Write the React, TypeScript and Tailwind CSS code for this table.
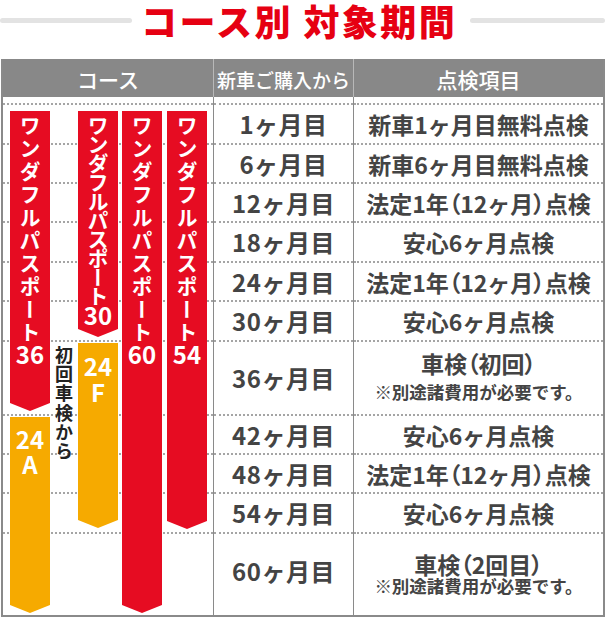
import React from "react";

const FONT = { fontFamily: '"Noto Sans CJK JP", "Noto Sans", sans-serif' };

type Row = { h: string; m: string; r: React.ReactNode; note?: "loose" | "tight" };

const P1 = <span className="[font-feature-settings:'palt']">（</span>;
const P2 = <span className="[font-feature-settings:'palt']">）</span>;

const houtei = (
  <>
    法定1年{P1}12ヶ月{P2}点検
  </>
);

const rows: Row[] = [
  { h: "row-start-3", m: "1ヶ月目", r: "新車1ヶ月目無料点検" },
  { h: "row-start-4", m: "6ヶ月目", r: "新車6ヶ月目無料点検" },
  { h: "row-start-5", m: "12ヶ月目", r: houtei },
  { h: "row-start-6", m: "18ヶ月目", r: "安心6ヶ月点検" },
  { h: "row-start-7", m: "24ヶ月目", r: houtei },
  { h: "row-start-8", m: "30ヶ月目", r: "安心6ヶ月点検" },
  { h: "row-start-9", m: "36ヶ月目", r: <>車検{P1}初回{P2}</>, note: "loose" },
  { h: "row-start-10", m: "42ヶ月目", r: "安心6ヶ月点検" },
  { h: "row-start-11", m: "48ヶ月目", r: houtei },
  { h: "row-start-12", m: "54ヶ月目", r: "安心6ヶ月点検" },
  { h: "row-start-13", m: "60ヶ月目", r: <>車検{P1}2回目{P2}</>, note: "tight" },
];

const chevron =
  "[clip-path:polygon(0_0,100%_0,100%_calc(100%_-_8px),50%_100%,0_calc(100%_-_8px))]";

function PassText({ num, tight }: { num: string; tight?: boolean }) {
  return (
    <>
      <div
        className={
          tight
            ? "[writing-mode:vertical-rl] text-[21px] leading-[30px] font-bold tracking-[-2px]"
            : "[writing-mode:vertical-rl] text-[21px] leading-[30px] font-bold tracking-[1.9px]"
        }
      >
        ワンダフルパスポート
      </div>
      <div className="text-[24px] leading-[24px] font-bold -mt-[2px]">{num}</div>
    </>
  );
}

export default function App() {
  return (
    <div className="w-[605px] h-[617px] bg-white overflow-hidden" style={FONT}>
      {/* Title */}
      <div className="flex items-center h-[41px]">
        <div className="w-[132px] h-[5px] rounded-full bg-[#e3e3e3]" />
        <h1 className="ml-[9px] mr-[13px] text-[36px] leading-[41px] font-black text-[#e60012] tracking-[2.4px] whitespace-nowrap">
          コース別 対象期間
        </h1>
        <div className="flex-1 h-[5px] rounded-full bg-[#e3e3e3]" />
      </div>

      {/* Table */}
      <div className="mt-[18px] ml-[1px] w-[604px] border-l-2 border-r-2 border-b-2 border-[#8a8a8a] grid grid-cols-[7px_40px_28px_40px_4px_40px_5px_40px_6px_140px_250px] grid-rows-[38px_6px_40px_39px_39px_40px_39px_40px_74px_39px_39px_40px_83px]">
        {/* header */}
        <div className="row-start-1 col-start-1 col-span-9 bg-[#888888] text-white text-[21px] font-medium flex items-center justify-center pt-[4px]">
          コース
        </div>
        <div className="row-start-1 col-start-10 bg-[#888888] border-l border-[#b8b8b8] text-white text-[19px] font-medium flex items-center justify-center pt-[4px] whitespace-nowrap">
          新車ご購入から
        </div>
        <div className="row-start-1 col-start-11 bg-[#888888] border-l border-[#b8b8b8] text-white text-[21px] font-medium flex items-center justify-center pt-[4px]">
          点検項目
        </div>

        {/* spacer row */}
        <div className="row-start-2 col-start-10 border-l border-[#8a8a8a]" />
        <div className="row-start-2 col-start-11 border-l border-[#8a8a8a]" />

        {/* rows */}
        {rows.map((row, i) => (
          <React.Fragment key={i}>
            <div className={`${row.h} col-start-1 col-span-9 border-t-2 border-dotted border-[#a5a5a5]`} />
            <div className={`${row.h} col-start-10 border-l border-[#8a8a8a] flex flex-col`}>
              <div className="border-t-2 border-dotted border-[#a5a5a5]" />
              <div
                className={
                  row.note === "tight"
                    ? "flex-1 flex items-center justify-center text-[24px] font-bold text-[#444] tracking-[0.5px] pb-[8px]"
                    : "flex-1 flex items-center justify-center text-[24px] font-bold text-[#444] tracking-[0.5px]"
                }
              >
                {row.m}
              </div>
            </div>
            <div className={`${row.h} col-start-11 border-l border-[#8a8a8a] flex flex-col`}>
              <div className="border-t-2 border-dotted border-[#a5a5a5]" />
              <div className="flex-1 flex flex-col items-center justify-center text-[#444] font-bold">
                <div
                  className={
                    row.note === "tight"
                      ? "text-[23px] leading-[22px] whitespace-nowrap"
                      : "text-[23px] leading-[28px] whitespace-nowrap"
                  }
                >
                  {row.r}
                </div>
                {row.note === "loose" && (
                  <div className="text-[17.5px] leading-[30px] whitespace-nowrap">※別途諸費用が必要です。</div>
                )}
                {row.note === "tight" && (
                  <div className="text-[17.5px] leading-[22px] whitespace-nowrap">※別途諸費用が必要です。</div>
                )}
              </div>
            </div>
          </React.Fragment>
        ))}

        {/* bars */}
        <div className={`row-start-3 row-span-7 col-start-2 self-start mt-[8px] h-[300px] bg-[#e60c22] text-white flex flex-col items-center pt-[4px] ${chevron}`}>
          <PassText num="36" />
        </div>
        <div className={`row-start-3 row-span-7 col-start-4 self-start mt-[8px] h-[226px] bg-[#e60c22] text-white flex flex-col items-center pt-[4px] ${chevron}`}>
          <PassText num="30" tight />
        </div>
        <div className={`row-start-3 row-span-11 col-start-6 self-start mt-[8px] h-[502px] bg-[#e60c22] text-white flex flex-col items-center pt-[4px] ${chevron}`}>
          <PassText num="60" />
        </div>
        <div className={`row-start-3 row-span-11 col-start-8 self-start mt-[8px] h-[418px] bg-[#e60c22] text-white flex flex-col items-center pt-[4px] ${chevron}`}>
          <PassText num="54" />
        </div>
        <div className={`row-start-9 row-span-5 col-start-4 self-start mt-[3px] h-[185px] bg-[#f6aa00] text-white flex flex-col items-center pt-[10px] text-[24px] leading-[26px] font-bold ${chevron}`}>
          <div>24</div>
          <div>F</div>
        </div>
        <div className={`row-start-10 row-span-4 col-start-2 self-start mt-[3px] h-[196px] bg-[#f6aa00] text-white flex flex-col items-center pt-[9px] text-[24px] leading-[25px] font-bold ${chevron}`}>
          <div>24</div>
          <div>A</div>
        </div>
        <div className="row-start-9 row-span-5 col-start-3 self-start justify-self-center mt-[6px] [writing-mode:vertical-rl] text-[18px] leading-[20px] font-bold tracking-[1.3px] text-[#222]">
          初回車検から
        </div>
      </div>
    </div>
  );
}
